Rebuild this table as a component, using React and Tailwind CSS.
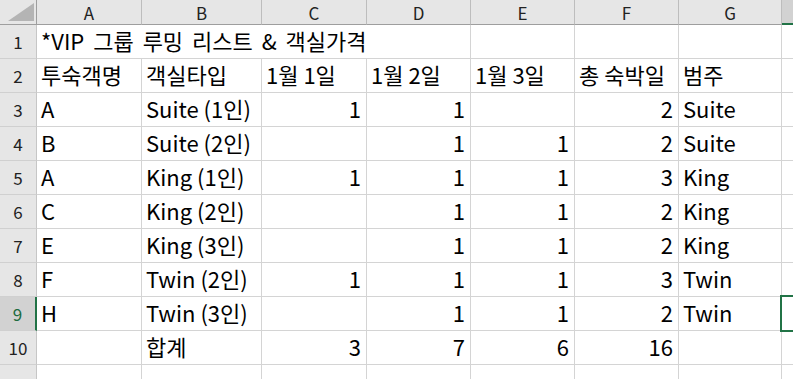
import React from "react";

const COLS = [
  { key: "A", w: "w-[105px]" },
  { key: "B", w: "w-[120px]" },
  { key: "C", w: "w-[105px]" },
  { key: "D", w: "w-[104px]" },
  { key: "E", w: "w-[104px]" },
  { key: "F", w: "w-[104px]" },
  { key: "G", w: "w-[103px]" },
];

// value: string = text (left), number = right aligned
const ROWS = [
  ["투숙객명", "객실타입", "1월 1일", "1월 2일", "1월 3일", "총 숙박일", "범주"],
  ["A", "Suite (1인)", 1, 1, null, 2, "Suite"],
  ["B", "Suite (2인)", null, 1, 1, 2, "Suite"],
  ["A", "King (1인)", 1, 1, 1, 3, "King"],
  ["C", "King (2인)", null, 1, 1, 2, "King"],
  ["E", "King (3인)", null, 1, 1, 2, "King"],
  ["F", "Twin (2인)", 1, 1, 1, 3, "Twin"],
  ["H", "Twin (3인)", null, 1, 1, 2, "Twin"],
  [null, "합계", 3, 7, 6, 16, null],
];

function RowHead({ n, selected }) {
  return (
    <div
      className={`flex h-full w-[37px] shrink-0 items-center justify-center border-b border-b-[#d0d0d0] text-[17px] ${
        selected
          ? "border-r-2 border-r-[#217346] bg-[#d2d2d2] text-[#1d6b40]"
          : "border-r border-r-[#c6c6c6] bg-[#e6e6e6] text-[#222]"
      }`}
    >
      {n}
    </div>
  );
}

function Cell({ w, value }) {
  const isNum = typeof value === "number";
  return (
    <div
      className={`flex h-full shrink-0 items-end overflow-visible whitespace-nowrap border-b border-r border-[#d4d4d4] pb-[7px] ${w} ${
        isNum ? "justify-end pr-[5px]" : "pl-[4px]"
      }`}
    >
      {value}
    </div>
  );
}

export default function App() {
  return (
    <div
      className="relative h-[379px] w-[793px] overflow-hidden bg-white text-[22px] leading-none text-black"
      style={{ fontFamily: '"Noto Sans CJK KR", "Noto Sans", sans-serif' }}
    >
      {/* column headers */}
      <div className="flex h-[25px]">
        <div className="relative h-full w-[37px] shrink-0 border-b border-r border-[#9e9e9e] bg-[#e6e6e6]">
          <svg className="absolute left-[8px] top-[3px]" width="26" height="18" viewBox="0 0 26 18">
            <polygon points="26,0 26,18 0,18" fill="#b4b4b4" />
          </svg>
        </div>
        {COLS.map((c) => (
          <div
            key={c.key}
            className={`flex h-full shrink-0 items-center justify-center border-b border-r border-b-[#9e9e9e] border-r-[#bdbdbd] bg-[#e6e6e6] text-[17px] text-[#222] ${c.w}`}
          >
            {c.key}
          </div>
        ))}
        <div className="h-full flex-1 border-b-2 border-b-[#217346] bg-[#d2d2d2]" />
      </div>

      {/* row 1 : overflowing title */}
      <div className="flex h-[34px]">
        <RowHead n={1} />
        <div className="flex h-full w-[434px] shrink-0 items-end whitespace-nowrap border-b border-r border-[#d4d4d4] pb-[7px] pl-[4px] [word-spacing:4px]">
          *VIP 그룹 루밍 리스트 &amp; 객실가격
        </div>
        {COLS.slice(4).map((c) => (
          <Cell key={c.key} w={c.w} value={null} />
        ))}
        <div className="h-full flex-1 border-b border-[#d4d4d4]" />
      </div>

      {ROWS.map((row, i) => {
        const n = i + 2;
        const selected = n === 9;
        return (
          <div key={n} className="flex h-[34px]">
            <RowHead n={n} selected={selected} />
            {COLS.map((c, j) => (
              <Cell key={c.key} w={c.w} value={row[j]} />
            ))}
            <div className="relative h-full flex-1 border-b border-[#d4d4d4]">
              {selected && (
                <div className="absolute -left-[2px] -top-[2px] h-[37px] w-[40px] border-2 border-[#217346]" />
              )}
            </div>
          </div>
        );
      })}

      {/* row 11, partly visible */}
      <div className="flex h-[34px]">
        <div className="flex h-full w-[37px] shrink-0 items-start justify-center border-r border-r-[#c6c6c6] bg-[#e6e6e6] pt-[10px] text-[17px] text-[#222]">
          11
        </div>
        {COLS.map((c) => (
          <div key={c.key} className={`h-full shrink-0 border-r border-[#d4d4d4] ${c.w}`} />
        ))}
        <div className="h-full flex-1" />
      </div>
    </div>
  );
}
